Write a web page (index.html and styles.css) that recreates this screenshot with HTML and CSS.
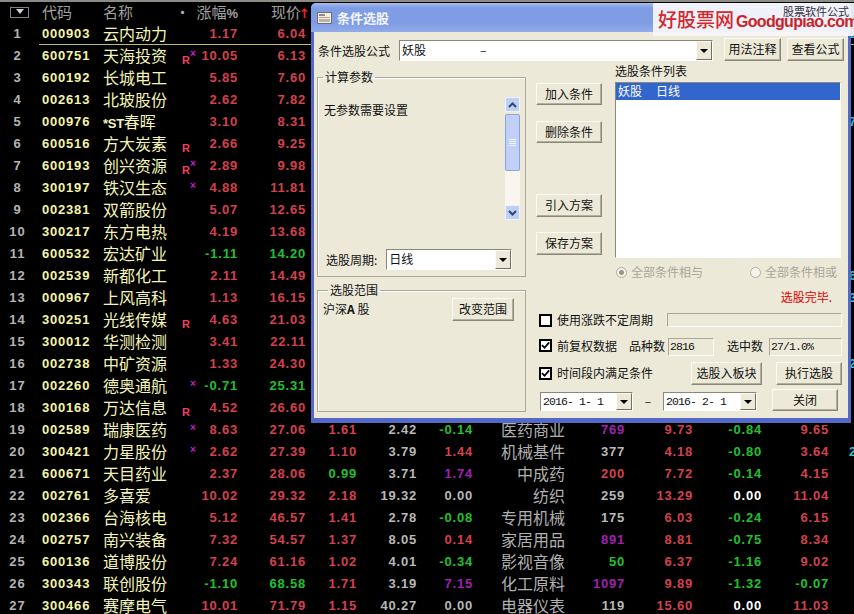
FILE: index.html
```html
<!DOCTYPE html>
<html>
<head>
<title>条件选股</title>
<link rel="stylesheet" href="styles.css">
</head>
<body>
<div id="quote-table">
  <div class="row head">
    <span class="rank"><i class="menu-box"></i></span><span class="code">代码</span><span class="name">名称</span><span class="dot">•</span><span class="num">涨幅<em>%</em></span><span class="num">现价<b class="up">↑</b></span>
  </div>
  <div class="row cur"><span class="rank">1</span><span class="code">000903</span><span class="name">云内动力</span><span class="mark"></span><span class="num r">1.17</span><span class="num r">6.04</span><span class="edge">2</span></div>
  <div class="row"><span class="rank">2</span><span class="code">600751</span><span class="name">天海投资</span><span class="mark"><b class="mr">R</b><b class="mx">×</b></span><span class="num r">10.05</span><span class="num r">6.13</span></div>
  <div class="row"><span class="rank">3</span><span class="code">600192</span><span class="name">长城电工</span><span class="mark"></span><span class="num r">5.85</span><span class="num r">7.60</span></div>
  <div class="row"><span class="rank">4</span><span class="code">002613</span><span class="name">北玻股份</span><span class="mark"></span><span class="num r">2.62</span><span class="num r">7.82</span></div>
  <div class="row"><span class="rank">5</span><span class="code">000976</span><span class="name"><span class="st">*ST</span>春晖</span><span class="mark"></span><span class="num r">3.10</span><span class="num r">8.31</span><span class="edge">7</span></div>
  <div class="row"><span class="rank">6</span><span class="code">600516</span><span class="name">方大炭素</span><span class="mark"><b class="mr">R</b></span><span class="num r">2.66</span><span class="num r">9.25</span></div>
  <div class="row"><span class="rank">7</span><span class="code">600193</span><span class="name">创兴资源</span><span class="mark"><b class="mr">R</b><b class="mx">×</b></span><span class="num r">2.89</span><span class="num r">9.98</span></div>
  <div class="row"><span class="rank">8</span><span class="code">300197</span><span class="name">铁汉生态</span><span class="mark"><b class="mx">×</b></span><span class="num r">4.88</span><span class="num r">11.81</span></div>
  <div class="row"><span class="rank">9</span><span class="code">002381</span><span class="name">双箭股份</span><span class="mark"></span><span class="num r">5.07</span><span class="num r">12.65</span></div>
  <div class="row"><span class="rank">10</span><span class="code">300217</span><span class="name">东方电热</span><span class="mark"></span><span class="num r">4.19</span><span class="num r">13.68</span></div>
  <div class="row"><span class="rank">11</span><span class="code">600532</span><span class="name">宏达矿业</span><span class="mark"></span><span class="num g">-1.11</span><span class="num g">14.20</span></div>
  <div class="row"><span class="rank">12</span><span class="code">002539</span><span class="name">新都化工</span><span class="mark"></span><span class="num r">2.11</span><span class="num r">14.49</span><span class="edge">6</span></div>
  <div class="row"><span class="rank">13</span><span class="code">000967</span><span class="name">上风高科</span><span class="mark"></span><span class="num r">1.13</span><span class="num r">16.15</span><span class="edge">3</span></div>
  <div class="row"><span class="rank">14</span><span class="code">300251</span><span class="name">光线传媒</span><span class="mark"><b class="mr">R</b></span><span class="num r">4.63</span><span class="num r">21.03</span></div>
  <div class="row"><span class="rank">15</span><span class="code">300012</span><span class="name">华测检测</span><span class="mark"></span><span class="num r">3.41</span><span class="num r">22.11</span></div>
  <div class="row"><span class="rank">16</span><span class="code">002738</span><span class="name">中矿资源</span><span class="mark"></span><span class="num r">1.33</span><span class="num r">24.30</span><span class="edge">2</span></div>
  <div class="row"><span class="rank">17</span><span class="code">002260</span><span class="name">德奥通航</span><span class="mark"><b class="mx">×</b></span><span class="num g">-0.71</span><span class="num g">25.31</span></div>
  <div class="row"><span class="rank">18</span><span class="code">300168</span><span class="name">万达信息</span><span class="mark"><b class="mr">R</b></span><span class="num r">4.52</span><span class="num r">26.60</span></div>
  <div class="row"><span class="rank">19</span><span class="code">002589</span><span class="name">瑞康医药</span><span class="mark"><b class="mx">×</b></span><span class="num r">8.63</span><span class="num r">27.06</span><span class="num r">1.61</span><span class="num w">2.42</span><span class="num g">-0.14</span><span class="ind">医药商业</span><span class="num p">769</span><span class="num r">9.73</span><span class="num g">-0.84</span><span class="num r">9.65</span></div>
  <div class="row"><span class="rank">20</span><span class="code">300421</span><span class="name">力星股份</span><span class="mark"><b class="mx">×</b></span><span class="num r">2.62</span><span class="num r">27.39</span><span class="num r">1.10</span><span class="num w">3.79</span><span class="num r">1.44</span><span class="ind">机械基件</span><span class="num w">377</span><span class="num r">4.18</span><span class="num g">-0.80</span><span class="num r">3.64</span><span class="edge">2</span></div>
  <div class="row"><span class="rank">21</span><span class="code">600671</span><span class="name">天目药业</span><span class="mark"></span><span class="num r">2.37</span><span class="num r">28.06</span><span class="num g">0.99</span><span class="num w">3.71</span><span class="num p">1.74</span><span class="ind">中成药</span><span class="num r">200</span><span class="num r">7.72</span><span class="num g">-0.14</span><span class="num r">4.15</span></div>
  <div class="row"><span class="rank">22</span><span class="code">002761</span><span class="name">多喜爱</span><span class="mark"></span><span class="num r">10.02</span><span class="num r">29.32</span><span class="num r">2.18</span><span class="num w">19.32</span><span class="num w">0.00</span><span class="ind">纺织</span><span class="num w">259</span><span class="num r">13.29</span><span class="num wh">0.00</span><span class="num r">11.04</span></div>
  <div class="row"><span class="rank">23</span><span class="code">002366</span><span class="name">台海核电</span><span class="mark"></span><span class="num r">5.12</span><span class="num r">46.57</span><span class="num r">1.41</span><span class="num w">2.78</span><span class="num g">-0.08</span><span class="ind">专用机械</span><span class="num w">175</span><span class="num r">6.03</span><span class="num g">-0.24</span><span class="num r">6.15</span></div>
  <div class="row"><span class="rank">24</span><span class="code">002757</span><span class="name">南兴装备</span><span class="mark"></span><span class="num r">7.32</span><span class="num r">54.57</span><span class="num r">1.37</span><span class="num w">8.05</span><span class="num r">0.14</span><span class="ind">家居用品</span><span class="num p">891</span><span class="num r">8.81</span><span class="num g">-0.75</span><span class="num r">8.34</span></div>
  <div class="row"><span class="rank">25</span><span class="code">600136</span><span class="name">道博股份</span><span class="mark"></span><span class="num r">7.24</span><span class="num r">61.16</span><span class="num r">1.02</span><span class="num w">4.01</span><span class="num g">-0.34</span><span class="ind">影视音像</span><span class="num g">50</span><span class="num r">6.37</span><span class="num g">-1.16</span><span class="num r">9.02</span></div>
  <div class="row"><span class="rank">26</span><span class="code">300343</span><span class="name">联创股份</span><span class="mark"></span><span class="num g">-1.10</span><span class="num g">68.58</span><span class="num r">1.71</span><span class="num w">3.19</span><span class="num p">7.15</span><span class="ind">化工原料</span><span class="num p">1097</span><span class="num r">9.89</span><span class="num g">-1.32</span><span class="num g">-0.07</span></div>
  <div class="row"><span class="rank">27</span><span class="code">300466</span><span class="name">赛摩电气</span><span class="mark"></span><span class="num r">10.01</span><span class="num r">71.79</span><span class="num r">1.15</span><span class="num w">40.27</span><span class="num w">0.00</span><span class="ind">电器仪表</span><span class="num w">119</span><span class="num r">15.60</span><span class="num wh">0.00</span><span class="num r">11.03</span></div>
</div>

<div id="dialog">
  <div class="titlebar">
    <svg class="title-icon" width="15" height="12" viewBox="0 0 15 12"><rect x="0.5" y="0.5" width="14" height="11" fill="#f4efe0" stroke="#6b6b78"/><rect x="2" y="2" width="6" height="2" fill="#8a8a90"/><rect x="2" y="5" width="11" height="1" fill="#c0a080"/><rect x="2" y="7" width="11" height="3" fill="#b8b4a8"/></svg>
    <span>条件选股</span>
  </div>
  <div class="dlg-body">
    <div class="formula-row">
      <label class="formula-label">条件选股公式</label>
      <div class="combo formula-combo"><span class="combo-text">妖股<span class="combo-dash">–</span></span><i class="combo-btn"></i></div>
      <button class="btn btn-notes">用法注释</button>
      <button class="btn">查看公式</button>
    </div>
    <div class="main">
      <div class="left-col">
        <fieldset class="group params">
          <legend>计算参数</legend>
          <div class="params-top">
            <span class="no-params">无参数需要设置</span>
            <div class="scrollbar">
              <div class="sb-btn"><svg width="9" height="6" viewBox="0 0 9 6"><path d="M1 5 L4.5 1.5 L8 5" fill="none" stroke="#34466e" stroke-width="2"/></svg></div>
              <div class="sb-thumb"><i></i><i></i><i></i><i></i></div>
              <div class="sb-track"></div>
              <div class="sb-btn"><svg width="9" height="6" viewBox="0 0 9 6"><path d="M1 1 L4.5 4.5 L8 1" fill="none" stroke="#34466e" stroke-width="2"/></svg></div>
            </div>
          </div>
          <div class="period-row">
            <label>选股周期:</label>
            <div class="combo period-combo"><span class="combo-text">日线</span><i class="combo-btn"></i></div>
          </div>
        </fieldset>
        <fieldset class="group scope">
          <legend>选股范围</legend>
          <span class="scope-text">沪深<b>A</b> 股</span>
          <button class="btn btn-scope">改变范围</button>
        </fieldset>
      </div>
      <div class="right-col">
        <div class="right-top">
          <div class="side-btns">
            <button class="btn">加入条件</button>
            <button class="btn">删除条件</button>
            <button class="btn btn-tall btn-gap">引入方案</button>
            <button class="btn btn-tall">保存方案</button>
          </div>
          <div class="list-col">
            <div class="list-label">选股条件列表</div>
            <div class="listbox"><div class="list-sel">妖股<span class="list-period">日线</span></div></div>
          </div>
        </div>
        <div class="radio-row">
          <span class="radio-item first"><i class="radio on"></i>全部条件相与</span>
          <span class="radio-item second"><i class="radio"></i>全部条件相或</span>
        </div>
        <div class="status">选股完毕.</div>
        <div class="opt-row opt-one">
          <span class="check"></span><span class="opt-text">使用涨跌不定周期</span>
          <div class="progress"></div>
        </div>
        <div class="opt-row opt-two">
          <span class="check"><svg width="10" height="9" viewBox="0 0 10 9"><path d="M1 4 L4 7 L9 1" fill="none" stroke="#000" stroke-width="2"/></svg></span><span class="opt-text">前复权数据</span>
          <span class="stat-label first">品种数</span><span class="stat-box small">2816</span>
          <span class="stat-label second">选中数</span><span class="stat-box">27/1.0%</span>
        </div>
        <div class="opt-row opt-three">
          <span class="check"><svg width="10" height="9" viewBox="0 0 10 9"><path d="M1 4 L4 7 L9 1" fill="none" stroke="#000" stroke-width="2"/></svg></span><span class="opt-text">时间段内满足条件</span>
          <button class="btn btn-board">选股入板块</button>
          <button class="btn btn-run">执行选股</button>
        </div>
        <div class="opt-row opt-four">
          <div class="combo date-combo"><span class="combo-text">2016- 1- 1</span><i class="combo-btn"></i></div>
          <span class="date-dash">–</span>
          <div class="combo date-combo"><span class="combo-text">2016- 2- 1</span><i class="combo-btn"></i></div>
          <button class="btn btn-close">关闭</button>
        </div>
      </div>
    </div>
  </div>
</div>

<div id="logo">
  <div class="logo-main"><span class="logo-cn">好股票网</span><span class="logo-en">Goodgupiao.com</span></div>
  <span class="logo-small">股票软件公式</span>
</div>
</body>
</html>
```

FILE: styles.css
```css
html, body {
  margin: 0;
  height: 614px;
  overflow: hidden;
  background-color: #000;
}
body {
  font-family: "Liberation Sans", "Noto Sans CJK SC", sans-serif;
  position: relative;
  border-top: 2px solid #8c8c86;
  box-sizing: border-box;
}

/* quote table */
.row {
  display: grid;
  grid-template-columns: 35px 65px 75px 20px 43px 68px 51px 60px 56px 92px 60px 68px 69px 67px 25px;
  height: 22px;
  line-height: 22px;
  white-space: nowrap;
  font-size: 13px;
  font-weight: bold;
}
.head {
  height: 21px;
  line-height: 19px;
  color: #a0a0a0;
  font-family: "Noto Sans CJK SC", sans-serif;
  font-size: 15px;
  font-weight: normal;
}
.head .num {
  font-family: "Noto Sans CJK SC", sans-serif;
  font-weight: normal;
  letter-spacing: 0;
}
.head .num em {
  font: bold 13px "Liberation Sans", sans-serif;
}
.head .code {
  font-family: "Noto Sans CJK SC", sans-serif;
  font-weight: normal;
  font-size: 15px;
  letter-spacing: 0;
  color: #a0a0a0;
}
.head .name {
  color: #a0a0a0;
  font-size: 15px;
  line-height: 19px;
}
.head .up {
  color: #f02020;
  font: bold 13px "DejaVu Sans", sans-serif;
  margin-right: -4px;
  margin-left: -2px;
}
.dot {
  color: #b0b0b0;
  text-align: left;
}
.menu-box {
  display: block;
  width: 17px;
  height: 9px;
  margin: 5px 0 0 10px;
  border: 1px solid #808080;
}
.menu-box::after {
  content: "";
  display: block;
  width: 0;
  margin: 1px auto 0;
  border: 4px solid transparent;
  border-top: 5px solid #d0d0d0;
  border-bottom: 0;
}
.rank {
  text-align: center;
  color: #b4b4b4;
  letter-spacing: 1px;
}
.code {
  padding-left: 7px;
  color: #f4f4a8;
  letter-spacing: 0.8px;
}
.name {
  padding-left: 3px;
  color: #f4f4b8;
  font-family: "Noto Sans CJK SC", sans-serif;
  font-size: 16px;
  font-weight: normal;
  line-height: 20px;
}
.st {
  font: bold 13px "Liberation Sans", sans-serif;
  letter-spacing: -0.3px;
}
.mark {
  display: grid;
  grid-template-columns: 7px 8px 5px;
  line-height: 12px;
}
.mr {
  grid-column: 2;
  margin-top: 9px;
  color: #f04060;
  font-size: 11px;
}
.mx {
  grid-column: 3;
  grid-row: 1;
  margin-top: 3px;
  color: #c020d0;
  font-size: 10px;
}
.num {
  text-align: right;
  letter-spacing: 0.8px;
}
.ind {
  text-align: right;
  color: #b0b0b0;
  font-family: "Noto Sans CJK SC", sans-serif;
  font-size: 16px;
  font-weight: normal;
  line-height: 20px;
}
.edge {
  grid-column: 15;
  padding-left: 20px;
  overflow: hidden;
  color: #30c0d0;
}
.r { color: #d4404e; }
.g { color: #20c030; }
.w { color: #b8b8b8; }
.p { color: #a020b0; }
.wh { color: #fff; }
.cur {
  background: linear-gradient(#bcbc60, #bcbc60) 39px 21px / 100% 1px no-repeat;
}

/* dialog window */
#dialog {
  position: absolute;
  left: 311px;
  top: 1px;
  width: 540px;
  height: 420px;
  box-sizing: border-box;
  padding: 0 3px 4px;
  background-color: #5468c8;
  border-radius: 5px 5px 0 0;
  font-family: "Noto Sans CJK SC", sans-serif;
  font-size: 12px;
  color: #111;
  white-space: nowrap;
}
.titlebar {
  display: flex;
  align-items: center;
  gap: 5px;
  height: 29px;
  margin: 0 -3px;
  padding-left: 6px;
  border-radius: 5px 5px 0 0;
  background: linear-gradient(#a8bcee, #7f9de4 5px, #7f9de4 70%, #92abea);
  color: #f4f6ff;
  font-weight: bold;
  font-size: 13px;
}
.dlg-body {
  height: 386px;
  padding: 6px 3px 0 4px;
  box-sizing: border-box;
  background-color: #ece9d8;
}
.formula-row {
  display: flex;
  align-items: flex-end;
  height: 23px;
}
.formula-label {
  width: 81px;
  line-height: 20px;
}
.formula-combo {
  width: 314px;
}
.combo-dash {
  margin-left: 54px;
}
.btn-notes {
  margin: 0 6px 0 11px;
}
.btn {
  height: 23px;
  width: 57px;
  padding: 0 0 2px;
  background-color: #ece9d8;
  border: 1px solid;
  border-color: #fbfaf4 #8a887a #8a887a #fbfaf4;
  box-shadow: inset -1px -1px 0 #b4b0a0;
  font-family: "Noto Sans CJK SC", sans-serif;
  font-size: 12px;
  color: #111;
}
.combo {
  display: flex;
  height: 21px;
  box-sizing: border-box;
  border: 1px solid;
  border-color: #8a887a #fff #fff #8a887a;
  background-color: #fff;
  line-height: 18px;
}
.combo-text {
  flex: 1;
  padding-left: 2px;
  white-space: pre;
}
.combo-btn {
  width: 16px;
  box-sizing: border-box;
  display: flex;
  align-items: center;
  justify-content: center;
  background-color: #ece9d8;
  border: 1px solid;
  border-color: #fbfaf4 #716f64 #716f64 #fbfaf4;
}
.combo-btn::after {
  content: "";
  border: 4px solid transparent;
  border-top: 4px solid #000;
  border-bottom: 0;
}
.main {
  display: flex;
  margin-top: 4px;
}

/* left groups */
.left-col {
  width: 209px;
  margin: 5px 0 0 -1px;
}
.group {
  margin: 0;
  padding: 0;
  border: 1px solid #aca899;
  box-shadow: inset 1px 1px 0 #fff;
  box-sizing: border-box;
}
.group legend {
  margin-left: 5px;
  padding: 0 2px;
  line-height: 14px;
}
.params {
  height: 207px;
  display: flex;
  flex-direction: column;
}
.params-top {
  display: flex;
  justify-content: space-between;
  height: 161px;
  padding: 4px 5px 0 6px;
}
.no-params {
  margin-top: 15px;
  line-height: 14px;
}
.scrollbar {
  width: 15px;
  height: 123px;
  margin-top: 9px;
  display: flex;
  flex-direction: column;
}
.sb-btn {
  height: 15px;
  display: flex;
  align-items: center;
  justify-content: center;
  background-color: #bfd0f6;
  border: 1px solid #eef2fc;
  box-sizing: border-box;
}
.sb-thumb {
  height: 57px;
  margin-top: 2px;
  display: flex;
  flex-direction: column;
  align-items: center;
  justify-content: center;
  gap: 1px;
  background-color: #c0d0f8;
  border: 1px solid #8ea4d8;
  border-radius: 2px;
  box-sizing: border-box;
}
.sb-thumb i {
  width: 7px;
  height: 1px;
  background-color: #eef2fc;
}
.sb-track {
  flex: 1;
  background-color: #f8f6ee;
}
.period-row {
  display: flex;
  align-items: center;
  gap: 9px;
  padding-left: 8px;
}
.period-combo {
  width: 126px;
}
.scope {
  height: 129px;
  margin-top: 6px;
  display: flex;
  align-items: flex-start;
  justify-content: space-between;
  padding: 1px 11px 0 5px;
}
.scope-text {
  margin-top: 4px;
  line-height: 14px;
}
.btn-scope {
  width: 62px;
}

/* right side */
.right-col {
  width: 306px;
  margin-left: 10px;
}
.right-top {
  display: flex;
  gap: 13px;
  height: 193px;
}
.side-btns {
  width: 66px;
  padding-top: 18px;
}
.side-btns .btn {
  display: block;
  width: 66px;
  height: 22px;
  margin-bottom: 16px;
}
.side-btns .btn-tall {
  height: 23px;
  margin-bottom: 15px;
}
.side-btns .btn-gap {
  margin-top: 51px;
}
.list-label {
  line-height: 14px;
  margin-top: -1px;
}
.listbox {
  width: 226px;
  height: 176px;
  margin-top: 4px;
  box-sizing: border-box;
  border: 1px solid;
  border-color: #8a887a #fff #fff #8a887a;
  background-color: #fff;
}
.list-sel {
  height: 17px;
  padding-left: 2px;
  line-height: 15px;
  background-color: #3366cc;
  color: #fff;
}
.list-period {
  margin-left: 14px;
}
.radio-row {
  display: flex;
  margin-top: 7px;
  color: #a8a698;
  line-height: 14px;
}
.radio-item {
  display: flex;
  align-items: center;
  gap: 4px;
}
.radio-item.first {
  margin-left: 80px;
}
.radio-item.second {
  margin-left: 47px;
}
.radio {
  display: block;
  width: 11px;
  height: 11px;
  box-sizing: border-box;
  border-radius: 50%;
  border: 1px solid #b0ae9e;
  background-color: #f6f4ea;
}
.radio.on {
  background: radial-gradient(circle, #999688 0 2px, #f6f4ea 3px);
}
.status {
  margin-top: 11px;
  padding-right: 10px;
  text-align: right;
  line-height: 14px;
  color: #e00000;
}
.opt-row {
  display: flex;
  align-items: center;
}
.opt-one {
  margin-top: 8px;
  height: 16px;
}
.opt-two {
  margin-top: 10px;
  height: 18px;
}
.opt-two .check {
  margin-bottom: 3px;
}
.opt-two .opt-text,
.opt-two .stat-label {
  margin-bottom: 3px;
}
.opt-three {
  margin-top: 6px;
  height: 22px;
}
.opt-four {
  margin-top: 5px;
  height: 22px;
  align-items: flex-end;
}
.check {
  display: flex;
  align-items: center;
  justify-content: center;
  flex: none;
  width: 13px;
  height: 13px;
  margin-left: 3px;
  border: 2px solid #000;
  box-sizing: border-box;
  background-color: #fff;
}
.opt-text {
  margin-left: 5px;
  line-height: 14px;
}
.progress {
  width: 175px;
  height: 14px;
  margin-left: 14px;
  box-sizing: border-box;
  border: 1px solid;
  border-color: #aca899 #fff #fff #aca899;
}
.stat-label.first {
  margin-left: 12px;
}
.stat-label.second {
  margin-left: 13px;
}
.stat-box {
  width: 73px;
  height: 18px;
  margin-left: 6px;
  padding-left: 1px;
  box-sizing: border-box;
  border: 1px solid;
  border-color: #aca899 #fff #fff #aca899;
  font: 11.5px/16px "Liberation Mono", monospace;
  letter-spacing: -0.9px;
}
.stat-box.small {
  width: 46px;
  margin-left: 3px;
}
.btn-board {
  width: 71px;
  margin-left: 38px;
}
.btn-run {
  width: 66px;
  margin-left: 14px;
}
.date-combo {
  width: 93px;
  height: 19px;
  margin-left: 4px;
  font: 11.5px/17px "Liberation Mono", monospace;
  letter-spacing: -0.9px;
}
.date-dash {
  width: 30px;
  text-align: center;
  line-height: 17px;
  margin-bottom: 2px;
}
.date-combo + .date-dash + .date-combo {
  width: 94px;
  margin-left: 0;
}
.btn-close {
  width: 66px;
  height: 22px;
  margin-left: 15px;
}

/* watermark */
#logo {
  position: absolute;
  left: 653px;
  top: 1px;
  width: 201px;
  height: 33px;
  background-color: rgba(246, 246, 250, 0.94);
  font-family: "Noto Sans CJK SC", sans-serif;
}
.logo-small {
  position: absolute;
  right: 5px;
  top: 1px;
  font-size: 11px;
  line-height: 14px;
  color: #303040;
  white-space: nowrap;
}
.logo-main {
  display: flex;
  align-items: flex-end;
  height: 29px;
  padding-left: 5px;
  white-space: nowrap;
}
.logo-cn {
  font-size: 19px;
  line-height: 26px;
  color: #d4282c;
  font-weight: 500;
}
.logo-en {
  margin-left: 2px;
  font: bold 16px/20px "Liberation Sans", sans-serif;
  color: #c8242a;
  letter-spacing: -0.7px;
}
```
